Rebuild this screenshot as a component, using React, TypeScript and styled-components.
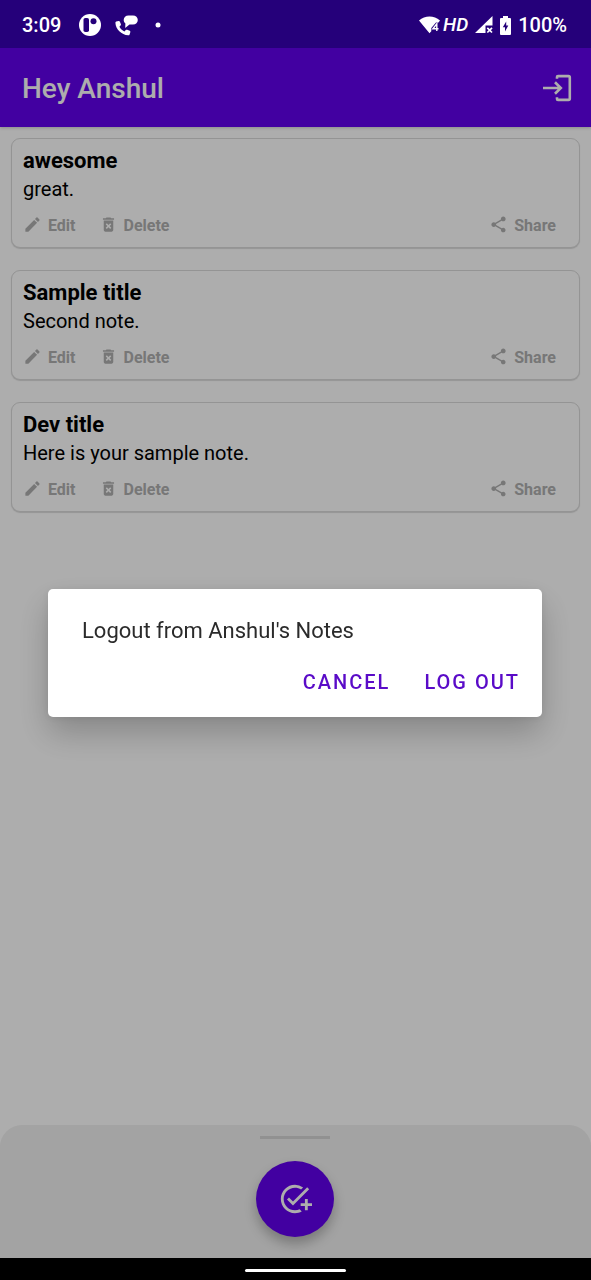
import React from "react";
import styled, { createGlobalStyle } from "styled-components";
import { MdAddTask, MdDeleteForever, MdEdit, MdShare } from "react-icons/md";

const GlobalStyle = createGlobalStyle`
  * { box-sizing: border-box; }
  body { margin: 0; background: #fff; font-family: Roboto, "Liberation Sans", sans-serif; }
  h1, h2, p, ul { margin: 0; padding: 0; }
  button { font-family: inherit; border: 0; padding: 0; background: none; cursor: pointer; }
`;

const Screen = styled.div`
  min-height: 100vh;
  display: flex;
  flex-direction: column;
  background: #fff;
`;

const StatusBar = styled.div`
  height: 48px;
  padding: 2px 24px 0 22px;
  display: flex;
  align-items: center;
  justify-content: space-between;
  background: #25007a;
  color: #fff;
  font-size: 20px;
  font-weight: 500;
  position: relative;
  z-index: 3;
`;

const StatusGroup = styled.div`
  display: flex;
  align-items: center;
  svg { display: block; }
`;

const Notifications = styled(StatusGroup)`
  gap: 14px;
  padding-left: 18px;
`;

const System = styled(StatusGroup)`
  gap: 7px;
`;

const Connection = styled(StatusGroup)`
  gap: 3px;
`;

const NetworkLabel = styled.span`
  font-size: 19px;
  line-height: 20px;
  font-style: italic;
  font-weight: 500;
`;

const AppBar = styled.header`
  height: 79px;
  padding: 0 19px 0 22px;
  display: flex;
  align-items: center;
  justify-content: space-between;
  background: #6200ee;
  color: #fff;
  box-shadow: 0 1px 3px rgba(0, 0, 0, 0.2);
`;

const Heading = styled.h1`
  padding-top: 2px;
  font-size: 28px;
  line-height: 36px;
  font-weight: 500;
`;

const IconButton = styled.button`
  color: #fff;
  svg { display: block; }
`;

const Notes = styled.ul`
  flex: 1;
  list-style: none;
  padding: 11px;
  display: flex;
  flex-direction: column;
  gap: 22px;
`;

const Card = styled.li`
  padding: 8px 23px 8px 11px;
  border: 1px solid #dadada;
  border-radius: 9px;
  box-shadow: 0 1px 1px rgba(0, 0, 0, 0.14);
  background: #fff;
`;

const Title = styled.h2`
  font-size: 22px;
  line-height: 28px;
  font-weight: 700;
  color: #000;
`;

const Body = styled.p`
  font-size: 20px;
  line-height: 28px;
  color: #000;
`;

const Actions = styled.div`
  margin-top: 8px;
  height: 28px;
  display: flex;
  align-items: center;
  gap: 23px;
`;

const Action = styled.button<{ $end?: boolean }>`
  margin-left: ${(p) => (p.$end ? "auto" : "0")};
  padding-top: 1px;
  display: flex;
  align-items: center;
  gap: 6px;
  font-size: 16px;
  line-height: 20px;
  font-weight: 700;
  color: #b0b0b0;
  svg { margin-top: -2px; }
`;

const Sheet = styled.footer`
  height: 133px;
  padding: 11px 2px 0 0;
  display: flex;
  flex-direction: column;
  align-items: center;
  gap: 22px;
  background: #f0f0f0;
  border-radius: 22px 22px 0 0;
`;

const Handle = styled.div`
  width: 70px;
  height: 3px;
  background: #d6d6d6;
`;

const Fab = styled.button`
  width: 78px;
  height: 76px;
  border-radius: 50%;
  display: grid;
  place-items: center;
  background: #6200ee;
  color: #fff;
  box-shadow: 0 7px 12px rgba(0, 0, 0, 0.25);
`;

const NavBar = styled.div`
  height: 22px;
  display: flex;
  justify-content: center;
  align-items: center;
  padding-top: 2px;
  background: #000;
  position: relative;
  z-index: 3;
`;

const HomePill = styled.div`
  width: 101px;
  height: 3px;
  border-radius: 2px;
  background: #fff;
`;

const Scrim = styled.div`
  position: fixed;
  inset: 0;
  z-index: 2;
  padding: 48px 49px 22px 48px;
  display: flex;
  align-items: center;
  background: rgba(0, 0, 0, 0.32);
`;

const Dialog = styled.div`
  width: 100%;
  padding: 28px 12px 11px 34px;
  border-radius: 5px;
  background: #fff;
  box-shadow: 0 16px 32px rgba(0, 0, 0, 0.22), 0 1px 8px rgba(0, 0, 0, 0.08);
`;

const Message = styled.p`
  font-size: 22px;
  line-height: 28px;
  color: #2b2b2b;
`;

const DialogActions = styled.div`
  margin-top: 13px;
  display: flex;
  justify-content: flex-end;
  gap: 12px;
`;

const DialogButton = styled.button`
  height: 48px;
  && { padding: 0 10px 0 12px; }
  color: #5a0bc8;
  font-size: 20px;
  font-weight: 500;
  letter-spacing: 2px;
  text-transform: uppercase;
`;

const NOTES = [
  { title: "awesome", body: "great." },
  { title: "Sample title", body: "Second note." },
  { title: "Dev title", body: "Here is your sample note." },
];

function AppBadge() {
  return (
    <svg width="22" height="22" viewBox="0 0 22 22" aria-hidden="true">
      <circle cx="11" cy="11" r="11" fill="#fff" />
      <rect x="4.500" y="4" width="5.500" height="14" rx="1.800" fill="#25007a" />
      <circle cx="14.500" cy="7.200" r="3" fill="#25007a" />
    </svg>
  );
}

function CallBubble() {
  return (
    <svg width="23" height="21" viewBox="0 0 23 21" aria-hidden="true">
      <path d="M1.200 6.600 3.600 6c.6-.1 1.100.2 1.300.7l1 2.600c.2.500 0 1-.4 1.300L4.400 11.800c1.100 2.100 2.800 3.600 5 4.600l1.400-1.300c.4-.4.9-.5 1.400-.3l2.500 1c.5.2.8.8.600 1.400l-.7 2.200c-.2.600-.8 1-1.400.9C6.400 19.700.700 14.400.400 7.700c0-.5.300-1 .8-1.100Z" fill="#fff" />
      <path d="M13.500.5H18c2.800 0 4.800 1.900 4.800 4.500s-2 4.600-4.800 4.600h-3.500l-4.300 3.400.2-4.400C9.400 7.700 8.700 6.500 8.700 5c0-2.600 2-4.500 4.800-4.500Z" fill="#fff" />
    </svg>
  );
}

function Wifi() {
  return (
    <svg width="21" height="18" viewBox="0 0 21 18" aria-hidden="true">
      <path d="M0 4.500C6-.8 15-.8 21 4.500L19.500 6.500H17L12.300 12v3.200L10.500 17.200Z" fill="#fff" />
      <path d="M17.800 15V7.800l-3.900 4.900h5.600" fill="none" stroke="#fff" strokeWidth="1.400" />
    </svg>
  );
}

function Signal() {
  return (
    <svg width="18" height="18" viewBox="0 0 18 18" aria-hidden="true">
      <path d="M17.500 0v9.500h-7V17H0Z" fill="#fff" />
      <path d="m12.300 11.800 4.700 4.700m0-4.700-4.700 4.700" stroke="#fff" strokeWidth="1.700" />
    </svg>
  );
}

function Battery() {
  return (
    <svg width="11" height="19" viewBox="0 0 11 19" aria-hidden="true">
      <path d="M3 0h5v2h2a1 1 0 0 1 1 1v15a1 1 0 0 1-1 1H1a1 1 0 0 1-1-1V3a1 1 0 0 1 1-1h2Z" fill="#fff" />
      <path d="M6.200 5.500 2.800 11.300h2.200V15.500l3.300-6H6.200Z" fill="#25007a" />
    </svg>
  );
}

function LogoutIcon() {
  return (
    <svg width="30" height="28" viewBox="0 0 30 28" fill="none" stroke="currentColor" strokeWidth="2.600" aria-hidden="true">
      <path d="M15 4.700V3.100c0-.6.400-1 1-1h10.500c.8 0 1.300.500 1.300 1.300v21.200c0 .8-.5 1.300-1.300 1.300H16c-.6 0-1-.4-1-1v-1.600" />
      <path d="M1 14h17.500M13 8.300l5.800 5.700-5.800 5.700" />
    </svg>
  );
}

function NoteCard({ title, body }: { title: string; body: string }) {
  return (
    <Card>
      <Title>{title}</Title>
      <Body>{body}</Body>
      <Actions>
        <Action type="button"><MdEdit size={19} />Edit</Action>
        <Action type="button"><MdDeleteForever size={19} />Delete</Action>
        <Action type="button" $end><MdShare size={19} />Share</Action>
      </Actions>
    </Card>
  );
}

export default function App() {
  return (
    <Screen>
      <GlobalStyle />
      <StatusBar>
        <StatusGroup>
          <span>3:09</span>
          <Notifications>
            <AppBadge />
            <CallBubble />
            <svg width="10" height="6" viewBox="0 0 10 6" aria-hidden="true"><circle cx="6" cy="3" r="2.500" fill="#fff" /></svg>
          </Notifications>
        </StatusGroup>
        <System>
          <Connection>
            <Wifi />
            <NetworkLabel>HD</NetworkLabel>
          </Connection>
          <Signal />
          <Battery />
          <span>100%</span>
        </System>
      </StatusBar>
      <AppBar>
        <Heading>Hey Anshul</Heading>
        <IconButton type="button" aria-label="Log out"><LogoutIcon /></IconButton>
      </AppBar>
      <Notes>
        {NOTES.map((note) => <NoteCard key={note.title} {...note} />)}
      </Notes>
      <Sheet>
        <Handle />
        <Fab type="button" aria-label="Add note"><MdAddTask size={34} /></Fab>
      </Sheet>
      <NavBar><HomePill /></NavBar>
      <Scrim>
        <Dialog role="alertdialog" aria-modal="true" aria-labelledby="logout-message">
          <Message id="logout-message">Logout from Anshul's Notes</Message>
          <DialogActions>
            <DialogButton type="button">Cancel</DialogButton>
            <DialogButton type="button">Log out</DialogButton>
          </DialogActions>
        </Dialog>
      </Scrim>
    </Screen>
  );
}
